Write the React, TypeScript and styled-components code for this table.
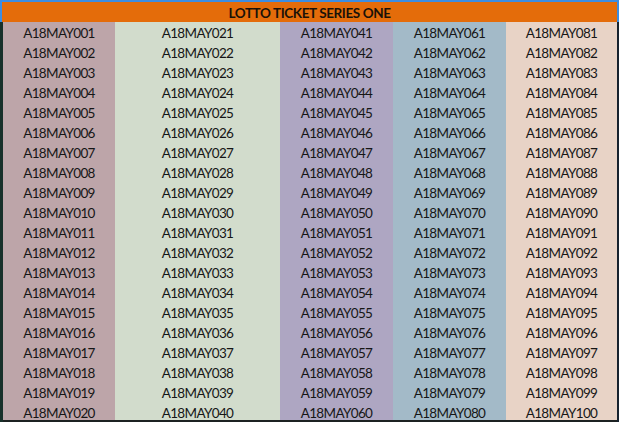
import React from "react";
import styled, { createGlobalStyle } from "styled-components";

const Global = createGlobalStyle`
  html, body { margin: 0; padding: 0; background: #ffffff; }
  body { width: 621px; height: 425px; overflow: hidden; }
`;

const Frame = styled.div`
  width: 621px;
  height: 425px;
  box-sizing: border-box;
  display: flex;
  flex-direction: column;
  background: #ffffff;
  font-family: Lato, "Liberation Sans", sans-serif;
`;

const Header = styled.div`
  height: 22px;
  box-sizing: border-box;
  margin-right: 2px;
  border-top: 2px solid #3d8de0;
  border-left: 2px solid #3d8de0;
  border-right: 2px solid #3d8de0;
  background: #e46c0a;
  display: flex;
  align-items: center;
  justify-content: center;
  font-weight: 700;
  font-size: 13.5px;
  letter-spacing: -0.4px;
  color: #1a1208;
  padding-top: 1px;
`;

const Body = styled.div`
  display: grid;
  grid-template-columns: 112px 165px 113px 113px 111px;
  margin-right: 2px;
  border-left: 3px solid #17302a;
  border-right: 2px solid #16222e;
`;

const Column = styled.div<{ $bg: string }>`
  display: flex;
  flex-direction: column;
  background: ${(p) => p.$bg};
`;

const Cell = styled.div<{ $last?: boolean }>`
  height: 20px;
  box-sizing: border-box;
  display: flex;
  align-items: center;
  justify-content: center;
  font-size: 13.5px;
  letter-spacing: -0.65px;
  color: #161616;
  padding-top: 2px;
  ${(p) =>
    p.$last
      ? `border-bottom: 2px solid #1c2222; padding-top: 4px;`
      : ""}
`;

const colors = ["#bda5a9", "#d2dccc", "#aea6c2", "#a3bac8", "#e8d3c6"];

export default function App() {
  return (
    <>
      <Global />
      <Frame>
        <Header>LOTTO TICKET SERIES ONE</Header>
        <Body>
          {colors.map((bg, c) => (
            <Column key={c} $bg={bg}>
              {Array.from({ length: 20 }, (_, r) => {
                const n = c * 20 + r + 1;
                return (
                  <Cell key={r} $last={r === 19}>
                    A18MAY{String(n).padStart(3, "0")}
                  </Cell>
                );
              })}
            </Column>
          ))}
        </Body>
      </Frame>
    </>
  );
}
